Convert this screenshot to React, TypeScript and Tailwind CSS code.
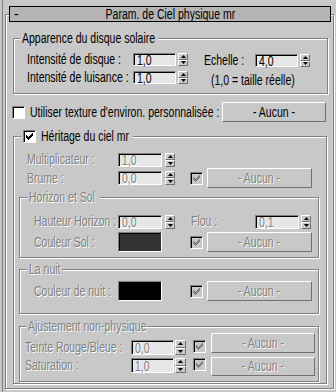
import type { ReactNode } from 'react'

// classic 3ds Max / Win32 look
const DIS = 'text-[#808080] [text-shadow:1px_1px_0_#fff]'
const SUNKEN = 'border border-t-[#808080] border-l-[#808080] border-r-white border-b-white shadow-[inset_1px_1px_0_#000]'
const RAISED = 'border border-t-white border-l-white border-r-[#707070] border-b-[#707070]'
const ETCHED = 'border border-[#808080] shadow-[inset_1px_1px_0_#fff,1px_1px_0_#fff]'

// the UI font is a narrow sans, so squeeze Liberation Sans horizontally
function T({ children, center, className = '' }: { children: ReactNode; center?: boolean; className?: string }) {
  return (
    <span className={`inline-block whitespace-nowrap scale-x-[0.75] ${center ? 'origin-center' : 'origin-left'} ${className}`}>
      {children}
    </span>
  )
}

function Label({ children, w, disabled, className = '' }: { children: ReactNode; w: string; disabled?: boolean; className?: string }) {
  return (
    <div className={`shrink-0 ${w} ${disabled ? DIS : ''} ${className}`}>
      <T>{children}</T>
    </div>
  )
}

function Spinner({ h = 'h-[13px]', w = 'w-[10px]', className = '' }: { h?: string; w?: string; className?: string }) {
  return (
    <div className={`flex shrink-0 flex-col ${w} ${h} ${className}`}>
      <div className={`flex flex-1 items-center justify-center ${RAISED}`}>
        <svg width="5" height="3" viewBox="0 0 5 3">
          <path d="M2.5 0 5 3H0z" fill="#000" />
        </svg>
      </div>
      <div className={`flex flex-1 items-center justify-center ${RAISED}`}>
        <svg width="5" height="3" viewBox="0 0 5 3">
          <path d="M0 0h5L2.5 3z" fill="#000" />
        </svg>
      </div>
    </div>
  )
}

function Field({ value, disabled, w = 'w-[43px]', h = 'h-[13px]' }: { value: string; disabled?: boolean; w?: string; h?: string }) {
  return (
    <div className={`flex shrink-0 items-center bg-[#e6e6e6] pl-[3px] leading-[12px] ${SUNKEN} ${w} ${h} ${disabled ? DIS : ''}`}>
      <T>{value}</T>
    </div>
  )
}

function Check({ checked, disabled, className = '' }: { checked?: boolean; disabled?: boolean; className?: string }) {
  return (
    <div className={`flex size-[13px] shrink-0 items-center justify-center ${SUNKEN} ${disabled ? 'bg-[#c8c8c8]' : 'bg-white'} ${className}`}>
      {checked && (
        <svg width="7" height="7" viewBox="0 0 7 7" shapeRendering="crispEdges">
          <path
            d="M6 0h1v1h-1z M5 1h2v1h-2z M0 2h1v1h-1z M4 2h3v1h-3z M0 3h2v1h-2z M3 3h3v1h-3z M0 4h5v1h-5z M1 5h3v1h-3z M2 6h1v1h-1z"
            fill={disabled ? '#808080' : '#000'}
          />
        </svg>
      )}
    </div>
  )
}

function Swatch({ color }: { color: string }) {
  return <div className={`h-[20px] w-[44px] shrink-0 ${SUNKEN} ${color}`} />
}

function Aucun({ disabled, className = '' }: { disabled?: boolean; className?: string }) {
  return (
    <div className={`flex shrink-0 items-center justify-center bg-[#c8c8c8] ${RAISED} ${disabled ? DIS : ''} ${className}`}>
      <T center>- Aucun -</T>
    </div>
  )
}

function Group({
  title,
  titleClass,
  className = '',
  children,
}: {
  title: ReactNode
  titleClass: string
  className?: string
  children?: ReactNode
}) {
  return (
    <div className={`${ETCHED} ${className}`}>
      <div className={`-mt-[8px] flex items-center overflow-visible bg-[#c8c8c8] px-[2px] leading-[15px] ${titleClass}`}>{title}</div>
      {children}
    </div>
  )
}

export default function App() {
  return (
    <div className="h-[392px] w-[336px] overflow-hidden bg-[#c8c8c8] pl-[5px] pt-[14px] font-['Liberation_Sans',Arial,sans-serif] text-[14px] leading-[15px] text-black shadow-[inset_2px_0_0_#c8c8c8,inset_3px_0_0_#808080]">
      {/* rollout */}
      <div className={`flex h-[375px] w-[329px] flex-col ${ETCHED}`}>
        {/* rollout header */}
        <div className="-mt-[9px] ml-[3px] flex h-[16px] w-[322px] shrink-0 items-center border border-black bg-[#b4b4b4] leading-[14px]">
          <span className="w-[14px] pl-[4px]">-</span>
          <div className="flex flex-1 justify-center pr-[14px]">
            <T center>Param. de Ciel physique mr</T>
          </div>
        </div>

        {/* sun disk */}
        <Group title={<T>Apparence du disque solaire</T>} titleClass="ml-[6px] w-[138px]" className="ml-[7px] mt-[16px] h-[56px] w-[315px] shrink-0">
          <div className="mt-[6px] flex">
            <div className="ml-[13px] flex flex-col gap-[3px]">
              <div className="flex items-center">
                <Label w="w-[106px]">Intensité de disque :</Label>
                <Field value="1,0" />
                <Spinner className="ml-[2px]" />
              </div>
              <div className="flex items-center">
                <Label w="w-[106px]">Intensité de luisance :</Label>
                <Field value="1,0" />
                <Spinner className="ml-[2px]" />
              </div>
            </div>
            <div className="ml-[16px] mt-[1px] flex flex-col">
              <div className="flex items-center">
                <Label w="w-[51px]">Echelle :</Label>
                <Field value="4,0" />
                <Spinner className="ml-[2px]" />
              </div>
              <Label w="w-[100px]" className="ml-[7px] mt-[5px]">(1,0 = taille réelle)</Label>
            </div>
          </div>
        </Group>

        {/* custom env texture */}
        <div className="mt-[8px] flex h-[20px] shrink-0 items-center">
          <Check className="ml-[6px]" />
          <Label w="w-[190px]" className="ml-[5px]">Utiliser texture d'environ. personnalisée :</Label>
          <Aucun className="ml-auto mr-[7px] h-[20px] w-[104px]" />
        </div>

        {/* inherit from mr sky */}
        <Group
          className="ml-[7px] mt-[14px] h-[248px] w-[314px] shrink-0"
          titleClass="ml-[7px] w-[112px] gap-[5px]"
          title={
            <>
              <Check checked />
              <T>Héritage du ciel mr</T>
            </>
          }
        >
          <div className="ml-[13px] mt-[8px] flex items-center">
            <Label w="w-[91px]" disabled>Multiplicateur :</Label>
            <Field value="1,0" disabled w="w-[44px]" h="h-[14px]" />
            <Spinner className="ml-[3px]" h="h-[14px]" />
          </div>
          <div className="ml-[13px] mt-[1px] flex h-[20px] items-center">
            <Label w="w-[91px]" disabled>Brume :</Label>
            <Field value="0,0" disabled w="w-[44px]" h="h-[14px]" />
            <Spinner className="ml-[3px]" h="h-[14px]" />
            <Check checked disabled className="ml-[15px]" />
            <Aucun disabled className="ml-[4px] h-[20px] w-[105px]" />
          </div>

          <Group title={<T>Horizon et Sol</T>} titleClass={`ml-[7px] w-[73px] ${DIS}`} className="ml-[5px] mt-[9px] h-[61px] w-[300px]">
            <div className="ml-[14px] mt-[9px] flex items-center">
              <Label w="w-[84px]" disabled>Hauteur Horizon :</Label>
              <Field value="0,0" disabled w="w-[44px]" h="h-[14px]" />
              <Spinner className="ml-[3px]" h="h-[14px]" />
              <Label w="w-[64px]" disabled className="ml-[16px]">Flou :</Label>
              <Field value="0,1" disabled w="w-[44px]" h="h-[14px]" />
              <Spinner className="ml-[2px]" h="h-[14px]" />
            </div>
            <div className="ml-[14px] mt-[3px] flex h-[20px] items-center">
              <Label w="w-[84px]" disabled>Couleur Sol :</Label>
              <Swatch color="bg-[#333333]" />
              <Check checked disabled className="ml-[28px]" />
              <Aucun disabled className="ml-[4px] h-[20px] w-[105px]" />
            </div>
          </Group>

          <Group title={<T>La nuit</T>} titleClass={`ml-[7px] w-[35px] ${DIS}`} className="ml-[5px] mt-[11px] h-[45px] w-[300px]">
            <div className="ml-[14px] mt-[4px] flex h-[20px] items-center">
              <Label w="w-[84px]" disabled>Couleur de nuit :</Label>
              <Swatch color="bg-black" />
              <Check checked disabled className="ml-[28px]" />
              <Aucun disabled className="ml-[4px] h-[20px] w-[105px]" />
            </div>
          </Group>

          <Group title={<T>Ajustement non-physique</T>} titleClass={`ml-[6px] w-[121px] ${DIS}`} className="ml-[5px] mt-[12px] h-[56px] w-[300px]">
            <div className="-mt-[1px] ml-[5px] flex h-[20px] items-start">
              <div className="mt-[7px] flex items-center">
                <Label w="w-[106px]" disabled>Teinte Rouge/Bleue :</Label>
                <Field value="0,0" disabled h="h-[15px]" />
                <Spinner className="ml-[1px]" w="w-[11px]" h="h-[15px]" />
              </div>
              <Check checked disabled className="ml-[7px] mt-[7px]" />
              <Aucun disabled className="ml-[5px] h-[20px] w-[104px]" />
            </div>
            <div className="ml-[5px] mt-[4px] flex h-[19px] items-start">
              <div className="mt-[1px] flex items-center">
                <Label w="w-[106px]" disabled>Saturation :</Label>
                <Field value="1,0" disabled h="h-[15px]" />
                <Spinner className="ml-[1px]" w="w-[11px]" h="h-[15px]" />
              </div>
              <Check checked disabled className="ml-[7px] mt-[1px]" />
              <Aucun disabled className="ml-[5px] h-[19px] w-[104px]" />
            </div>
          </Group>
        </Group>
      </div>
    </div>
  )
}
